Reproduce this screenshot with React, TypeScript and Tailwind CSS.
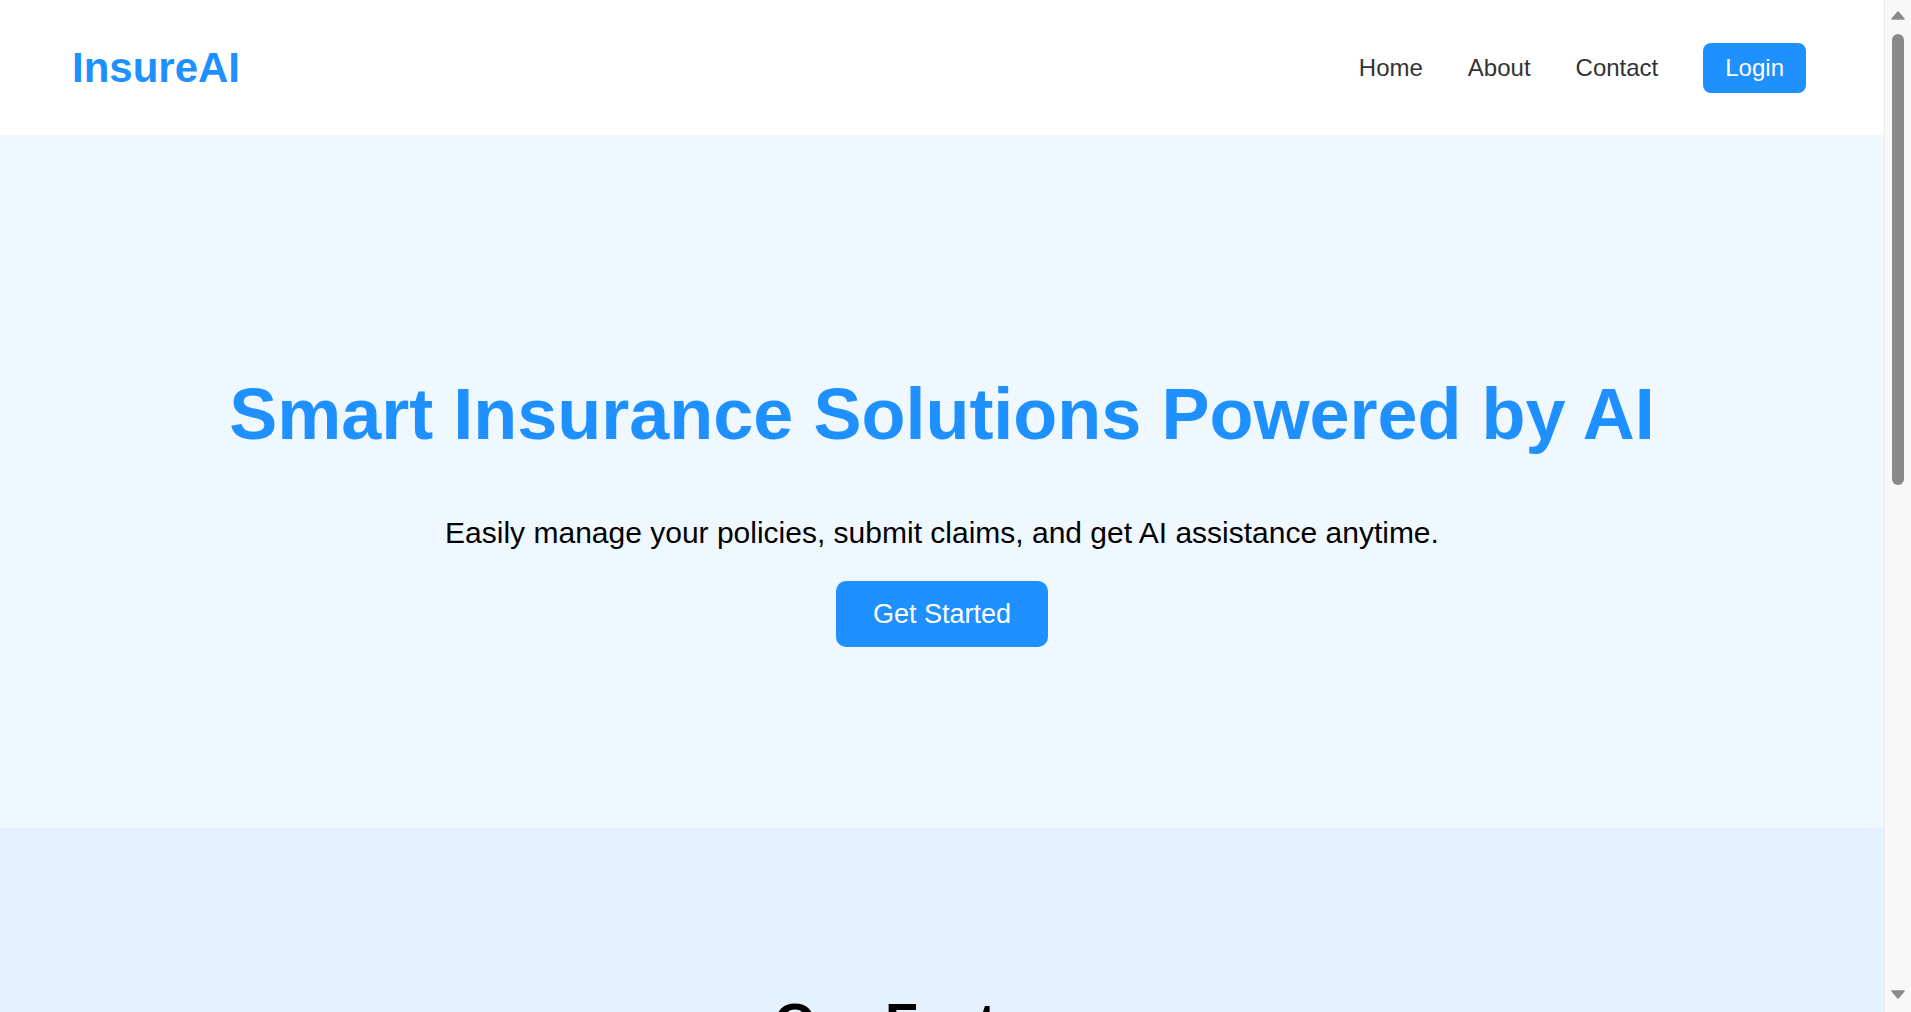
import React from "react";

const features = [
    { title: "Policy Management", desc: "View, renew and update all of your insurance policies in one place." },
    { title: "Fast Claims", desc: "Submit claims online and track their progress in real time." },
    { title: "AI Assistant", desc: "Get instant answers to your coverage questions, day or night." },
];

// Classic scrollbar as seen in the screenshot
function ScrollTrack() {
    return (
        <div className="flex h-full w-[27px] shrink-0 flex-col items-center border-l border-[#EDEDED] bg-[#F8F8F8]">
            <svg width="14" height="10" viewBox="0 0 14 10" className="mt-[11px]">
                <path d="M7 1 L13 8 L1 8 Z" fill="#8A8A8A" strokeLinejoin="round" stroke="#8A8A8A" strokeWidth="1.5" />
            </svg>
            <div className="mt-[13px] h-[451px] w-[12px] rounded-full bg-[#8A8A8A]" />
            <div className="flex-1" />
            <svg width="14" height="10" viewBox="0 0 14 10" className="mb-[13px]">
                <path d="M1 2 L13 2 L7 9 Z" fill="#8A8A8A" strokeLinejoin="round" stroke="#8A8A8A" strokeWidth="1.5" />
            </svg>
        </div>
    );
}

export default function App() {
    return (
        <div className="flex h-screen overflow-hidden bg-white font-['Liberation_Sans',Arial,sans-serif]">
            <main className="h-full flex-1 overflow-y-auto [scrollbar-width:none]">
                {/* Header */}
                <header className="flex h-[135px] items-center justify-between bg-white pl-[72px] pr-[78px]">
                    <div className="text-[42px] font-bold text-[#1E90FF]">InsureAI</div>
                    <nav className="flex items-center gap-[45px] text-[24px] leading-[28px] text-[#333333]">
                        <a href="#">Home</a>
                        <a href="#">About</a>
                        <a href="#">Contact</a>
                        <button className="rounded-[8px] bg-[#1E90FF] px-[22px] py-[11px] text-[24px] leading-[28px] text-white">
                            Login
                        </button>
                    </nav>
                </header>

                {/* Hero */}
                <section className="flex flex-col items-center bg-[#EFF7FF] pb-[181px] pt-[238px] text-center">
                    <h1 className="text-[72px] font-bold leading-[83px] text-[#1E90FF]">
                        Smart Insurance Solutions Powered by AI
                    </h1>
                    <p className="mt-[60px] text-[30px] leading-[34px] text-black">
                        Easily manage your policies, submit claims, and get AI assistance anytime.
                    </p>
                    <button className="mt-[31px] h-[66px] rounded-[10px] bg-[#1E90FF] px-[37px] text-[27px] leading-[31px] text-white">
                        Get Started
                    </button>
                </section>

                {/* Features */}
                <section className="bg-[#E5F1FF] px-[72px] pb-[144px] pt-[163px]">
                    <h2 className="text-center text-[54px] font-bold leading-[62px] text-black">Our Features</h2>
                    <div className="mt-[72px] grid grid-cols-3 gap-[48px]">
                        {features.map((f) => (
                            <div key={f.title} className="rounded-[12px] bg-white p-[36px] shadow-md">
                                <h3 className="text-[30px] font-bold text-[#1E90FF]">{f.title}</h3>
                                <p className="mt-[16px] text-[22px] text-[#333333]">{f.desc}</p>
                            </div>
                        ))}
                    </div>
                </section>
            </main>
            <ScrollTrack />
        </div>
    );
}
